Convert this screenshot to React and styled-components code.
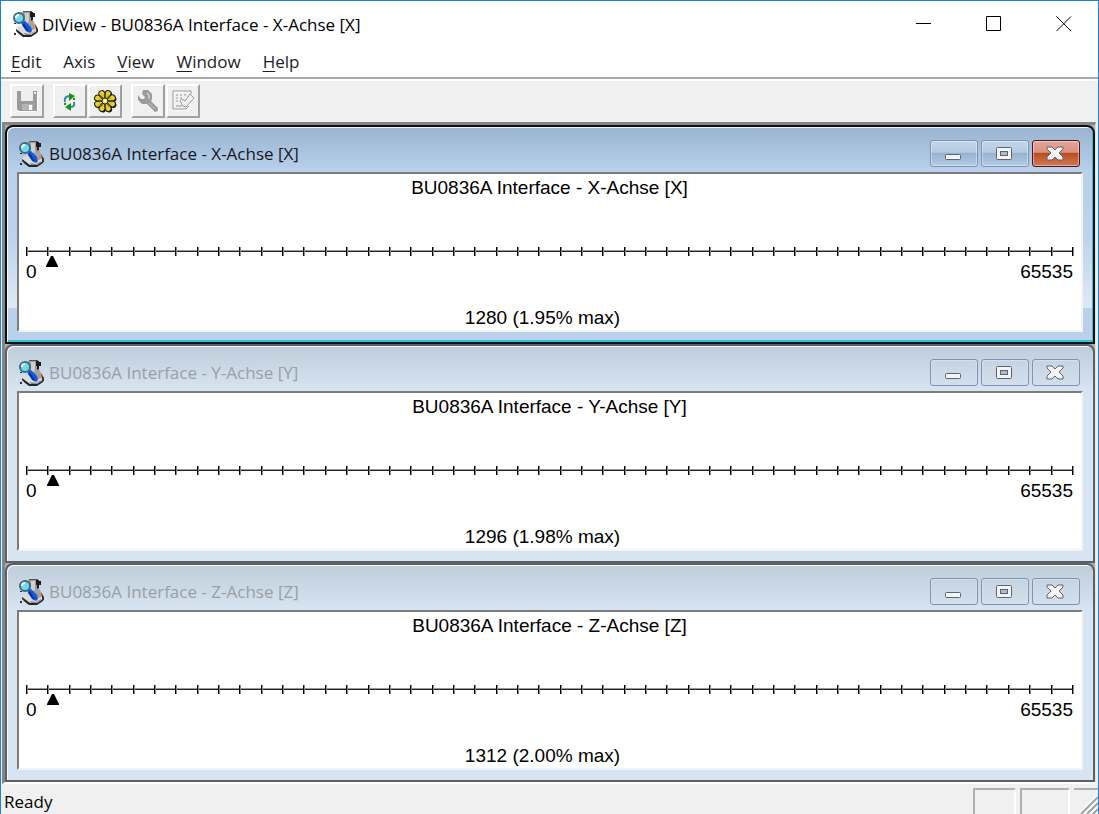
import styled, { createGlobalStyle } from "styled-components";

const MAX = 65535;

const axes = [
  { id: "x", title: "BU0836A Interface - X-Achse [X]", value: 1280, active: true },
  { id: "y", title: "BU0836A Interface - Y-Achse [Y]", value: 1296 },
  { id: "z", title: "BU0836A Interface - Z-Achse [Z]", value: 1312 },
];

const menus = ["Edit", "Axis", "View", "Window", "Help"];
const ticks = Array.from({ length: 50 }, (_, i) => i);
const teeth = [0, 45, 90, 135, 180, 225, 270, 315];

const JoystickIcon = () => (
  <svg width="26" height="26" viewBox="0 0 26 26" aria-hidden="true">
    <path d="M8 2l3-1h8l1 2v10l-3 2-8-2z" fill="#9a9a9a" />
    <path d="M13 2h4v10h-4z" fill="#cfcfcf" />
    <path d="M11 0h9v1h-9z" fill="#555" />
    <path d="M18 1h3v1h2v4h-2v4h-2V6h-1z" fill="#1c1c1c" />
    <path d="M16 11l5-2 2 4 2 4v4l-4 1-5-6z" fill="#a4a4a4" />
    <path d="M5 16l5-2 6 6 5-1 4-2v4l-6 4h-6l-9-6z" fill="#dcdcdc" />
    <path d="M4 18l8 6h7l6-4v2l-6 4h-8l-4-3-3-3z" fill="#262626" />
    <path d="M12 22l6 1 5-3v1l-5 3h-5z" fill="#8a8a8a" />
    <path d="M10 11l3-1 6 6 1 4-2 2-4-2-4-6z" fill="#0a5ce0" />
    <path d="M11 13l5 7" stroke="#06308c" strokeWidth="2" />
    <path d="M20 14h2v2h1v2h-3z" fill="#e08a68" />
    <path d="M23 13l3 5v3l-2 1v-4z" fill="#333" />
    <circle cx="7" cy="7" r="5" fill="#6bdcf0" stroke="#3f6a80" strokeWidth="2" />
    <path d="M4 7c0-2 1-3 3-3" stroke="#fff" strokeWidth="2" fill="none" />
    <path d="M2 12h2v1H2zM2 22h2v2H2z" fill="#333" />
  </svg>
);

const SaveIcon = () => (
  <svg width="22" height="22" viewBox="0 0 22 22" aria-hidden="true">
    <path d="M1 1h20v20H3l-2-2z" fill="#9b9b9b" />
    <path d="M5 1h12v10H5z" fill="#efefef" />
    <path d="M18 2h2v2h-2z" fill="#efefef" />
    <path d="M6 14h11v6H6z" fill="#b4b4b4" />
    <path d="M13 15h3v5h-3z" fill="#fff" />
    <path d="M1 21h20V2h1v20H2z" fill="#fff" />
  </svg>
);

const RefreshIcon = () => (
  <svg width="22" height="22" viewBox="0 0 22 22" aria-hidden="true">
    <path d="M6 12c-1-4 1-6 5-6" stroke="#2a8fa0" strokeWidth="2" fill="none" />
    <path d="M10 3l6 3-6 5z" fill="#189018" />
    <path d="M15 12c1 4-1 5-4 5" stroke="#2a8fa0" strokeWidth="2" fill="none" />
    <path d="M12 13v8l-6-4z" fill="#189018" />
    <path d="M14 8h2v2h-2zM5 13h2v2H5z" fill="#189018" />
  </svg>
);

const GearIcon = () => (
  <svg width="24" height="24" viewBox="0 0 24 24" aria-hidden="true">
    <g fill="#0c0c0c">
      <circle cx="13" cy="13" r="8" />
      {teeth.map((deg) => (
        <circle key={deg} cx="13" cy="5" r="3" transform={`rotate(${deg + 22} 13 13)`} />
      ))}
    </g>
    <g fill="#e2cf38" stroke="#1a1804">
      {teeth.map((deg) => (
        <circle key={deg} cx="12" cy="4" r="3" transform={`rotate(${deg + 22} 12 12)`} />
      ))}
    </g>
    <circle cx="12" cy="12" r="7" fill="#d6c434" />
    <g fill="#5a5010">
      {teeth.map((deg) => (
        <rect key={deg} x="11" y="5" width="2" height="4" transform={`rotate(${deg} 12 12)`} />
      ))}
    </g>
    <circle cx="12" cy="12" r="3" fill="#f4e878" stroke="#2a2608" />
    <circle cx="12" cy="12" r="1" fill="#fff" />
  </svg>
);

const WrenchIcon = () => (
  <svg width="24" height="24" viewBox="0 0 24 24" aria-hidden="true">
    <path d="M14 11l9 9v3l-3 1-9-10z" fill="#fff" />
    <path
      d="M7 1h5l4 4v5l-1 2 7 7v3l-3 1-8-8H6L2 11V6l3 4h3l1-2-3-3z"
      fill="#9b9b9b"
    />
    <path d="M11 4l2 2v4" stroke="#efefef" fill="none" />
    <path d="M13 14l6 6" stroke="#c4c4c4" />
  </svg>
);

const FormIcon = () => (
  <svg width="24" height="24" viewBox="0 0 24 24" aria-hidden="true">
    <g fill="none" stroke="#fff" transform="translate(1 1)">
      <path d="M2 2h18v3M2 2v18h13l3-3" />
      <path d="M10 13l5 5 8-9" />
    </g>
    <g fill="none" stroke="#999">
      <path d="M2 2h18v3M2 2v18h13l3-3" />
      <path d="M9 12l2-2 3 2 5-7 4 4-8 9-3-1z" />
      <path d="M5 6h2M9 6h2M13 6h2M5 9h2M9 9h2M5 12h2M5 17h6" />
    </g>
  </svg>
);

const MinGlyph = () => (
  <svg width="18" height="16" viewBox="0 0 18 16" aria-hidden="true">
    <rect x="1.5" y="8.5" width="15" height="5" rx="1" fill="#f4f4f4" stroke="#5c6470" />
  </svg>
);

const MaxGlyph = () => (
  <svg width="18" height="16" viewBox="0 0 18 16" aria-hidden="true">
    <rect x="1.5" y="1.5" width="15" height="12" rx="1" fill="#f4f4f4" stroke="#5c6470" />
    <rect x="5.5" y="5.5" width="7" height="4" fill="#a8bdd4" stroke="#5c6470" />
  </svg>
);

const CloseGlyph = () => (
  <svg width="18" height="16" viewBox="0 0 18 16" aria-hidden="true">
    <path
      d="M1 1h5l3 3 3-3h5v2l-4 4 4 4v3h-5l-3-3-3 3H1v-3l4-4-4-4z"
      fill="#f4f4f4"
      stroke="#5c6470"
      strokeLinejoin="round"
    />
  </svg>
);

const AxisWindow = ({ title, value, active }) => {
  const percent = (value / MAX) * 100;
  return (
    <Child $active={active}>
      <ChildBar>
        <JoystickIcon />
        <ChildTitle $active={active}>{title}</ChildTitle>
        <ChildButton type="button" aria-label="Minimize" $active={active}>
          <MinGlyph />
        </ChildButton>
        <ChildButton type="button" aria-label="Maximize" $active={active}>
          <MaxGlyph />
        </ChildButton>
        <ChildButton type="button" aria-label="Close" $active={active} $close>
          <CloseGlyph />
        </ChildButton>
      </ChildBar>
      <Panel>
        <p>{title}</p>
        <Scale>
          <Ruler>
            {ticks.map((i) => (
              <span key={i} />
            ))}
          </Ruler>
          <Track>
            <span style={{ width: `${percent}%` }} />
            <svg width="12" height="11" viewBox="0 0 12 11" aria-hidden="true">
              <path d="M5 0h2l5 10v1H0v-1z" fill="#000" />
            </svg>
          </Track>
          <Limits>
            <span>0</span>
            <span>{MAX}</span>
          </Limits>
        </Scale>
        <Reading>
          {value} ({percent.toFixed(2)}% max)
        </Reading>
      </Panel>
    </Child>
  );
};

const App = () => {
  return (
    <>
      <GlobalStyle />
      <Frame>
        <TitleBar>
          <JoystickIcon />
          <h1>DIView - BU0836A Interface - X-Achse [X]</h1>
          <CaptionButton type="button" aria-label="Minimize">
            <svg width="16" height="16" viewBox="0 0 16 16">
              <path d="M0 7.5h15" />
            </svg>
          </CaptionButton>
          <CaptionButton type="button" aria-label="Maximize">
            <svg width="16" height="16" viewBox="0 0 16 16">
              <path d="M.5.5h14v14H.5z" />
            </svg>
          </CaptionButton>
          <CaptionButton type="button" aria-label="Close">
            <svg width="16" height="16" viewBox="0 0 16 16">
              <path d="M.5.5L15 15M15 .5L.5 15" />
            </svg>
          </CaptionButton>
        </TitleBar>
        <MenuBar>
          {menus.map((name) => (
            <button type="button" key={name}>
              {name === "Axis" ? (
                name
              ) : (
                <>
                  <u>{name[0]}</u>
                  {name.slice(1)}
                </>
              )}
            </button>
          ))}
        </MenuBar>
        <ToolBar>
          <ToolGroup>
            <ToolButton type="button" aria-label="Save" disabled>
              <SaveIcon />
            </ToolButton>
          </ToolGroup>
          <ToolGroup>
            <ToolButton type="button" aria-label="Refresh">
              <RefreshIcon />
            </ToolButton>
            <ToolButton type="button" aria-label="Settings">
              <GearIcon />
            </ToolButton>
          </ToolGroup>
          <ToolGroup>
            <ToolButton type="button" aria-label="Calibrate" disabled>
              <WrenchIcon />
            </ToolButton>
            <ToolButton type="button" aria-label="Properties" disabled>
              <FormIcon />
            </ToolButton>
          </ToolGroup>
        </ToolBar>
        <Workspace>
          {axes.map((axis) => (
            <AxisWindow key={axis.id} {...axis} />
          ))}
        </Workspace>
        <StatusBar>
          <p>Ready</p>
          <Pane $width={43} />
          <Pane $width={50} />
          <Pane $width={24} $last>
            <svg width="20" height="20" viewBox="0 0 20 20" aria-hidden="true">
              <path d="M3 20L20 3M9 20L20 9M15 20l5-5" stroke="#fff" strokeWidth="5" />
              <path d="M3 20L20 3M9 20L20 9M15 20l5-5" stroke="#a0a0a0" strokeWidth="2" />
            </svg>
          </Pane>
        </StatusBar>
      </Frame>
    </>
  );
};
export default App;

const GlobalStyle = createGlobalStyle`
  * {
    box-sizing: border-box;
  }
  body {
    margin: 0;
    font-family: "Open Sans", "Noto Sans", sans-serif;
    font-size: 17px;
    color: #000;
  }
  p,
  h1,
  h2 {
    margin: 0;
    font-size: inherit;
    font-weight: 400;
  }
  button {
    padding: 0;
    font: inherit;
    color: inherit;
  }
  svg {
    display: block;
    flex: none;
  }
`;

const Frame = styled.div`
  height: 100vh;
  display: flex;
  flex-direction: column;
  border: 1px solid #1883d7;
  border-bottom: 0;
  background: #f0f0f0;
  overflow: hidden;
`;

const TitleBar = styled.header`
  height: 46px;
  flex: none;
  display: flex;
  align-items: center;
  padding-left: 11px;
  background: #fff;
  h1 {
    flex: 1;
    padding-left: 4px;
    white-space: nowrap;
  }
`;

const CaptionButton = styled.button`
  width: 70px;
  height: 45px;
  display: grid;
  place-items: center;
  padding-left: 1px;
  border: 0;
  background: transparent;
  svg {
    fill: none;
    stroke: #000;
  }
`;

const MenuBar = styled.nav`
  height: 32px;
  flex: none;
  display: flex;
  align-items: center;
  gap: 22px;
  padding: 0 10px 2px;
  background: #fff;
  border-bottom: 2px solid #a8a8a8;
  button {
    border: 0;
    background: transparent;
    color: #1c1c28;
  }
  u {
    text-underline-offset: 3px;
  }
`;

const ToolBar = styled.div`
  height: 43px;
  flex: none;
  display: flex;
  align-items: center;
  gap: 9px;
  padding: 0 9px 2px;
  border-top: 2px solid #fff;
`;

const ToolGroup = styled.div`
  display: flex;
  gap: 1px;
`;

const ToolButton = styled.button`
  width: 34px;
  height: 34px;
  display: grid;
  place-items: center;
  border: 2px solid;
  border-color: #fff #a0a0a0 #a0a0a0 #fff;
  background: #f0f0f0;
`;

const Workspace = styled.main`
  flex: 1;
  min-height: 0;
  margin: 0 2px 0 1px;
  display: grid;
  grid-auto-rows: 1fr;
  border-style: solid;
  border-width: 3px 1px 2px 3px;
  border-color: #868686 #e3e3e3 #fff #868686;
  background: #ababab;
`;

const Child = styled.section`
  display: flex;
  flex-direction: column;
  padding: 0 10px 10px;
  border: 2px solid ${(props) => (props.$active ? "#0a1014" : "#5c5f63")};
  border-radius: 8px 8px 0 0;
  background: ${(props) =>
    props.$active
      ? "linear-gradient(#99b4d1 0, #b9d1ea 45px, #bdd3eb 110px, #dfe9f4 181px, #b9d1ea 181px)"
      : "linear-gradient(#bfcddb 0, #d7e4f2 45px)"};
  box-shadow: ${(props) =>
    props.$active
      ? "inset 1px 1px #f4f8fc, inset -1px -2px #2cc4d4"
      : "inset 1px 1px #f4f8fc"};
`;

const ChildBar = styled.header`
  height: 45px;
  flex: none;
  display: flex;
  align-items: center;
  gap: 3px;
  padding: 8px 3px 0 1px;
`;

const ChildTitle = styled.h2`
  flex: 1;
  padding-left: 2px;
  white-space: nowrap;
  color: ${(props) => (props.$active ? "#16161e" : "#9a9fa4")};
`;

const childButtonFill = ({ $active, $close }) => {
  if ($active && $close) {
    return "linear-gradient(#e4a598 0, #dc9080 45%, #b8501c 50%, #d4785a 100%)";
  }
  if ($active) {
    return "linear-gradient(#c4d6ea 0, #b4cae2 45%, #97b3d1 50%, #b4cce4 100%)";
  }
  return "linear-gradient(#c6d4e2, #d2dfed)";
};

const ChildButton = styled.button`
  width: 48px;
  height: 27px;
  display: grid;
  place-items: center;
  padding-right: 2px;
  border: 1px solid
    ${(props) => (props.$active && props.$close ? "#4e1522" : "#8092b0")};
  border-radius: 3px;
  background: ${childButtonFill};
  box-shadow: inset 0 0 0 1px
    ${(props) => (props.$active ? "rgba(255, 255, 255, 0.4)" : "#d4e0ec")};
`;

const Panel = styled.div`
  flex: 1;
  display: flex;
  flex-direction: column;
  justify-content: space-between;
  border: 2px solid;
  border-color: #7c7c7c #f4f4f4 #f4f4f4 #7c7c7c;
  background: #fff;
  padding: 2px 8px 0 7px;
  font-family: "Liberation Sans", Arial, sans-serif;
  font-size: 19px;
  line-height: 24px;
  text-align: center;
`;

const Scale = styled.div`
  padding-top: 24px;
`;

const Ruler = styled.div`
  height: 9px;
  display: flex;
  justify-content: space-between;
  background: linear-gradient(#999 50%, #222 50%) center / 100% 2px no-repeat;
  span {
    width: 1px;
    background: #000;
    box-shadow: 1px 0 #888;
  }
`;

const Track = styled.div`
  height: 11px;
  display: flex;
  span {
    flex: none;
  }
`;

const Limits = styled.div`
  display: flex;
  justify-content: space-between;
  margin-top: -7px;
`;

const Reading = styled.p`
  padding-right: 14px;
`;

const StatusBar = styled.footer`
  height: 30px;
  flex: none;
  display: flex;
  align-items: stretch;
  gap: 4px;
  padding: 4px 0 0 3px;
  p {
    flex: 1;
    line-height: 28px;
  }
`;

const Pane = styled.div`
  width: ${(props) => props.$width}px;
  display: flex;
  align-items: flex-end;
  justify-content: flex-end;
  border-top: 2px solid #b0b0b0;
  border-left: ${(props) => (props.$last ? "0" : "2px solid #b0b0b0")};
  border-right: ${(props) => (props.$last ? "0" : "2px solid #fff")};
`;
